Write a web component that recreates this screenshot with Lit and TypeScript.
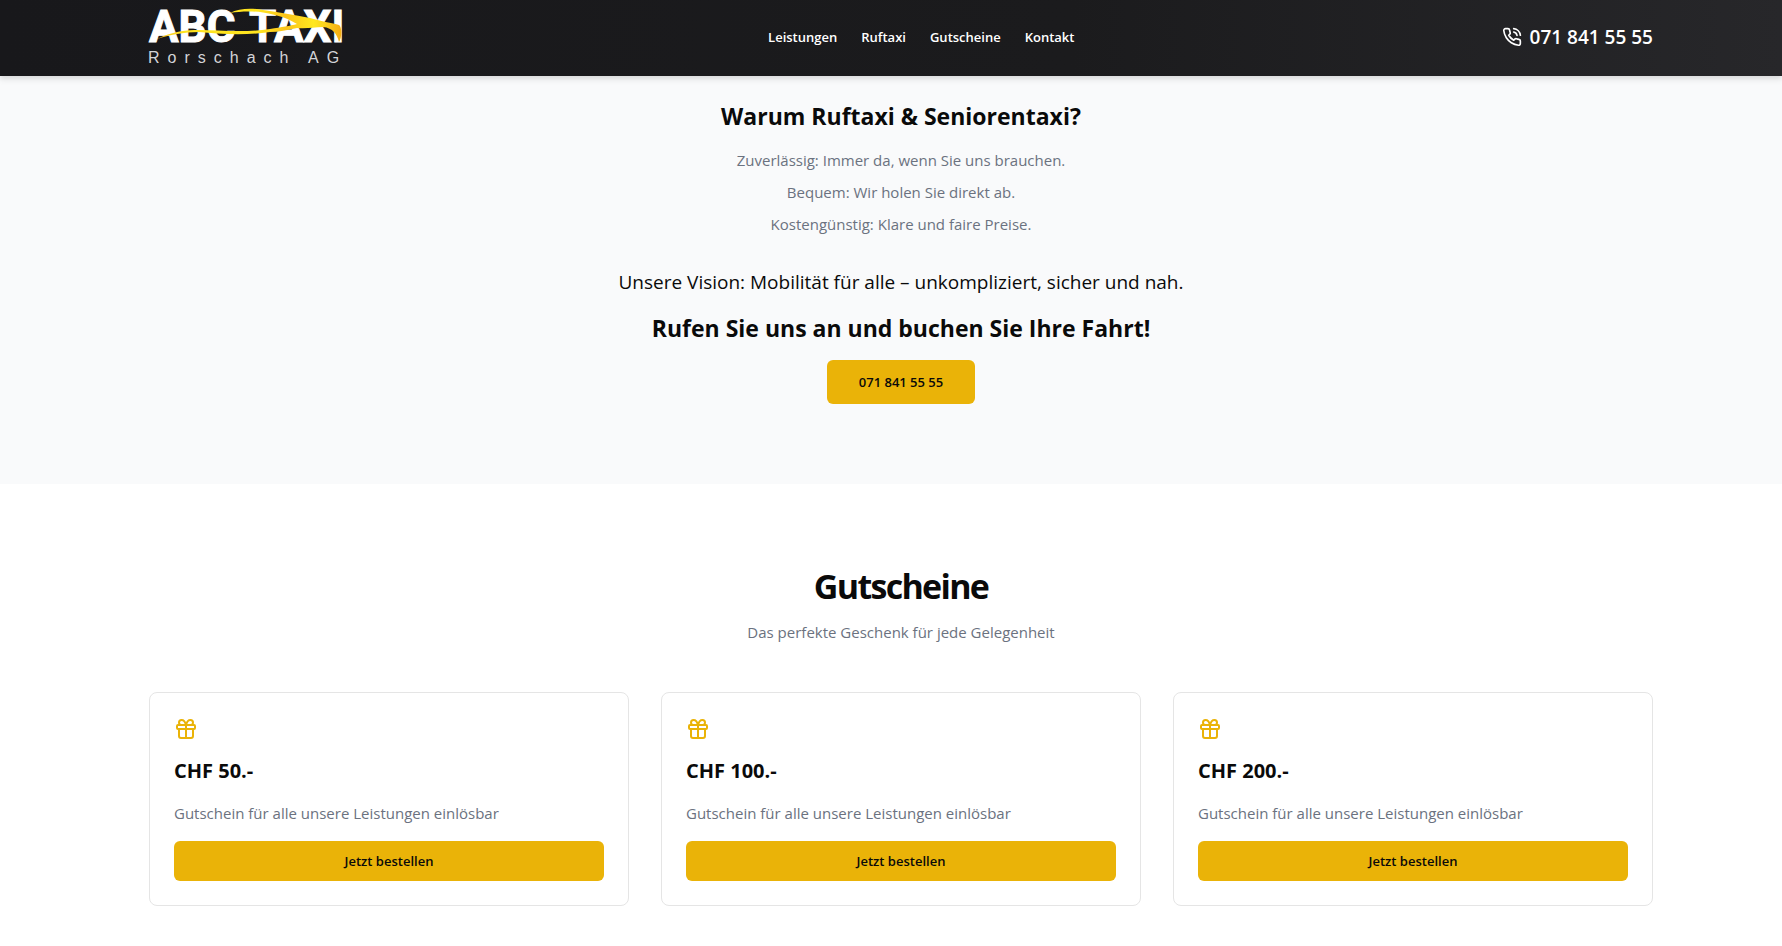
import { LitElement, html, css, svg } from "lit";
import { customElement, property } from "lit/decorators.js";

const phoneIcon = svg`<path d="M22 16.92v3a2 2 0 0 1-2.18 2 19.79 19.79 0 0 1-8.63-3.07 19.5 19.5 0 0 1-6-6 19.79 19.79 0 0 1-3.07-8.67A2 2 0 0 1 4.11 2h3a2 2 0 0 1 2 1.72 12.84 12.84 0 0 0 .7 2.81 2 2 0 0 1-.45 2.11L8.09 9.91a16 16 0 0 0 6 6l1.27-1.27a2 2 0 0 1 2.11-.45 12.84 12.84 0 0 0 2.81.7A2 2 0 0 1 22 16.92z"/><path d="M14.05 2a9 9 0 0 1 8 7.94"/><path d="M14.05 6A5 5 0 0 1 18 10"/>`;

const giftIcon = svg`<rect x="3" y="8" width="18" height="4" rx="1"/><path d="M12 8v13"/><path d="M19 12v7a2 2 0 0 1-2 2H7a2 2 0 0 1-2-2v-7"/><path d="M7.5 8a2.5 2.5 0 0 1 0-5A4.8 8 0 0 1 12 8a4.8 8 0 0 1 4.5-5 2.5 2.5 0 0 1 0 5"/>`;

@customElement("taxi-logo")
export class TaxiLogo extends LitElement {
  static styles = css`
    :host { display: block; }
    svg { display: block; width: 192px; height: 60px; overflow: visible; }
    .name { font: 700 44px Roboto, "Liberation Sans", sans-serif; fill: #fff; stroke: #fff; stroke-width: 1; }
    .place { font: 400 16px "Liberation Sans", Arial, sans-serif; letter-spacing: 8px; fill: #d4d4d8; }
  `;
  render() {
    return html`<svg viewBox="0 0 192 60" role="img" aria-label="ABC TAXI Rorschach AG">
      <defs>
        <linearGradient id="swoosh" x1="0" x2="1">
          <stop offset="0" stop-color="#fcc21b" />
          <stop offset="0.15" stop-color="#ffe41f" />
          <stop offset="0.55" stop-color="#ffe41f" />
          <stop offset="0.7" stop-color="#fbc41a" />
          <stop offset="0.85" stop-color="#ffe81f" />
          <stop offset="1" stop-color="#f5ae16" />
        </linearGradient>
      </defs>
      <text class="name" x="0" y="35">ABC</text>
      <text class="name" x="100" y="35">TAXI</text>
      <path fill="url(#swoosh)" d="M8 32C24 24 38 23 50 23C70 23 95 26 121 22C133 20 141 19 148 17C140 12 130 8 114 5.5C104 4 92 4 81 6C90 1 104 1 114 3C130 5 145 8 161 11C170 14 184 16 190 18C193 20 193 30 190 35C188 27 184 21 174 20C165 20 158 22 148 21C138 23 130 25 121 25C95 29 70 27 50 25C35 25 20 28 8 32Z" />
      <text class="place" x="-1" y="56">Rorschach AG</text>
    </svg>`;
  }
}

@customElement("voucher-card")
export class VoucherCard extends LitElement {
  @property({ type: Number }) amount = 0;
  static styles = css`
    :host { display: flex; flex-direction: column; gap: 16px; padding: 24px; border: 1px solid #e5e5e5; border-radius: 8px; background: #fff; }
    svg { width: 24px; height: 24px; display: block; fill: none; stroke: #eab308; stroke-width: 2; stroke-linecap: round; stroke-linejoin: round; }
    h3 { margin: 0; font-size: 20px; line-height: 28px; font-weight: 700; }
    p { margin: 0; font-size: 15px; line-height: 24px; color: #6b7280; }
    button { height: 40px; border: 0; border-radius: 6px; background: #eab308; color: #0a0a0a; font: inherit; font-size: 13px; font-weight: 600; cursor: pointer; }
  `;
  render() {
    return html`
      <svg viewBox="0 0 24 24" aria-hidden="true">${giftIcon}</svg>
      <h3>CHF ${this.amount}.-</h3>
      <p>Gutschein für alle unsere Leistungen einlösbar</p>
      <button type="button">Jetzt bestellen</button>
    `;
  }
}

@customElement("app-root")
export class AppRoot extends LitElement {
  static styles = css`
    :host { display: block; min-height: 100vh; background: #fff; color: #0a0a0a; font-family: "Open Sans", "Noto Sans", sans-serif; --gutter: 0 129px 0 149px; }
    h2, h3, p, ul { margin: 0; padding: 0; }
    a { color: inherit; text-decoration: none; }
    header { position: relative; display: flex; align-items: center; justify-content: space-between; height: 76px; padding: var(--gutter); padding-bottom: 2px; box-sizing: border-box; background: linear-gradient(to right, #18181b, #1b1b1d 60%, #27272a); color: #fff; box-shadow: 0 4px 6px rgba(0, 0, 0, 0.08), 0 2px 4px rgba(0, 0, 0, 0.06); }
    nav { display: flex; gap: 24px; font-size: 13px; line-height: 20px; font-weight: 600; }
    .phone { display: flex; align-items: center; gap: 8px; font-size: 19px; line-height: 28px; font-weight: 600; }
    .phone svg { width: 20px; height: 20px; fill: none; stroke: currentColor; stroke-width: 2; stroke-linecap: round; stroke-linejoin: round; }
    .why { display: flex; flex-direction: column; align-items: center; gap: 16px; padding: var(--gutter); padding-top: 24px; padding-bottom: 80px; background: #f9fafb; text-align: center; }
    .title { font-size: 23px; line-height: 32px; font-weight: 700; }
    ul { display: grid; gap: 8px; margin-bottom: 16px; list-style: none; }
    li, .lead { font-size: 15px; line-height: 24px; color: #6b7280; }
    .vision { font-size: 19px; line-height: 28px; }
    .call { padding: 12px 32px; border-radius: 6px; background: #eab308; font-size: 13px; line-height: 20px; font-weight: 600; }
    .vouchers { padding: var(--gutter); padding-top: 80px; padding-bottom: 40px; text-align: center; }
    .vouchers h2 { font-size: 34px; line-height: 44px; font-weight: 700; letter-spacing: -0.05em; }
    .lead { margin-top: 12px; }
    .cards { display: grid; grid-template-columns: repeat(3, 1fr); gap: 32px; margin-top: 48px; text-align: left; }
  `;
  render() {
    return html`
      <header>
        <a href="#"><taxi-logo></taxi-logo></a>
        <nav aria-label="Hauptmenü">
          ${["Leistungen", "Ruftaxi", "Gutscheine", "Kontakt"].map(
            (name) => html`<a href="#${name.toLowerCase()}">${name}</a>`
          )}
        </nav>
        <a class="phone" href="tel:0718415555"><svg viewBox="0 0 24 24" aria-hidden="true">${phoneIcon}</svg><span>071 841 55 55</span></a>
      </header>
      <main>
        <section class="why" id="ruftaxi">
          <h3 class="title">Warum Ruftaxi &amp; Seniorentaxi?</h3>
          <ul>
            <li>Zuverlässig: Immer da, wenn Sie uns brauchen.</li>
            <li>Bequem: Wir holen Sie direkt ab.</li>
            <li>Kostengünstig: Klare und faire Preise.</li>
          </ul>
          <p class="vision">Unsere Vision: Mobilität für alle – unkompliziert, sicher und nah.</p>
          <p class="title">Rufen Sie uns an und buchen Sie Ihre Fahrt!</p>
          <a class="call" href="tel:0718415555">071 841 55 55</a>
        </section>
        <section class="vouchers" id="gutscheine">
          <h2>Gutscheine</h2>
          <p class="lead">Das perfekte Geschenk für jede Gelegenheit</p>
          <div class="cards">
            ${[50, 100, 200].map((amount) => html`<voucher-card .amount=${amount}></voucher-card>`)}
          </div>
        </section>
      </main>
    `;
  }
}
